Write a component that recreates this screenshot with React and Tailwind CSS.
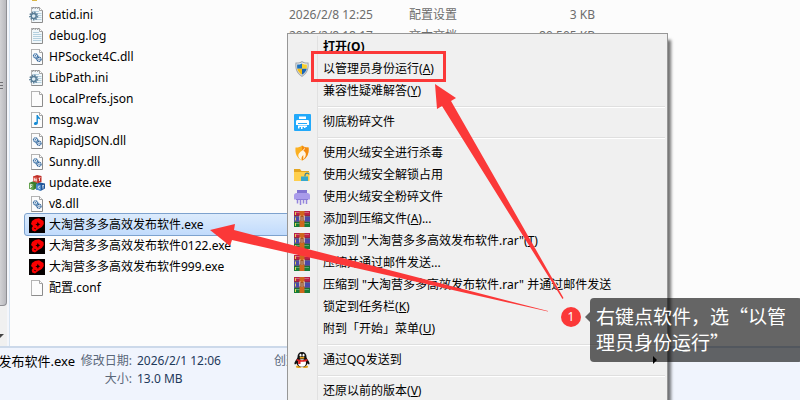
import React from "react";

function Page({ children, lines, spiral }) {
  return (
    <svg viewBox="0 0 16 16" className="size-4 shrink-0" aria-hidden="true">
      <path d="M2.5 .5h8l3 3v12h-11z" fill={lines ? "#f1f7fa" : "#fcfcfc"} stroke="#8c8c8c" />
      <path d="M2.5 15V.5h8" fill="none" stroke="#b4b4b4" />
      <path d="M10.5 .5v3h3" fill="#fff" stroke="#a5a5a5" />
      {lines && <path d="M4 4.5h6M4 6.5h8.5M4 8.5h8.5M4 10.5h8.5M4 12.5h8.5" stroke="#b4d0df" />}
      {spiral && <path d="M3.500 1.800l1-1.500M6 1.800l1-1.500M8.500 1.800l1-1.500" stroke="#777" />}
      {children}
    </svg>
  );
}

function FileIcon({ kind }) {
  if (kind === "ini")
    return (
      <Page lines spiral>
        <circle cx="4.7" cy="9" r="3.7" fill="none" stroke="#5f8199" strokeWidth="1.8" strokeDasharray="1.4 1.1" />
        <circle cx="4.7" cy="9" r="2.5" fill="#dcebf3" stroke="#557b95" strokeWidth="1.4" />
      </Page>
    );
  if (kind === "log") return <Page lines spiral />;
  if (kind === "dll")
    return (
      <Page>
        <path d="M6.500 7l3.600 3.200" stroke="#8fb0ce" strokeWidth="4.500" strokeLinecap="round" />
        <circle cx="6.5" cy="6.8" r="2" fill="#fff" stroke="#3c71a5" strokeWidth="1.3" strokeDasharray="1.3 .5" />
        <circle cx="10" cy="10.3" r="2" fill="#fff" stroke="#2f6299" strokeWidth="1.3" strokeDasharray="1.3 .5" />
        <circle cx="6.5" cy="6.8" r=".7" fill="#3c71a5" />
        <circle cx="10" cy="10.3" r=".7" fill="#3c71a5" />
      </Page>
    );
  if (kind === "wav")
    return (
      <Page>
        <path d="M7.5 3h1.400c.2 2 2.800 2.400 2.400 5.200-.4-1.200-1.300-1.700-2.400-1.800V11c0 2.400-4 2.600-4 .7 0-1.300 1.400-1.800 2.600-1.500z" fill="#168bd4" />
      </Page>
    );
  if (kind === "blank") return <Page />;
  if (kind === "update")
    return (
      <svg viewBox="0 0 16 16" className="size-4 shrink-0" aria-hidden="true">
        <path d="M4 1.500l4-1.500 4.500 1v6l-4 1.500-4.500-1z" fill="#bf3029" />
        <path d="M4 1.500l4.500 1v6l-4.500-1z" fill="#db5a4f" />
        <path d="M5.300 3v3M7.200 3.500v3M5.300 4.700l2 .3M9.500 3.300l2-.7M10.500 3v3" stroke="#fff" strokeWidth=".8" />
        <path d="M0 8l3.500-1.500 4.500 1.200V13l-3.500 2L0 13.500z" fill="#3b7d2e" />
        <path d="M0 8l4.500 1.200V15L0 13.500z" fill="#68a552" />
        <path d="M1.500 13V9.500l2 .5M1.500 11.300l1.500.3" stroke="#fff" strokeWidth=".8" fill="none" />
        <path d="M7 9l4-1.500 5 1v5l-4 2.300-5-1.300z" fill="#1f5699" />
        <path d="M7 9l5 1v5.800l-5-1.300z" fill="#4a88ca" />
        <path d="M11 11.300c-2-1-2.500 2.300-.3 2.300M13 11l2-.8M14 10.700v3" stroke="#fff" strokeWidth=".8" fill="none" />
      </svg>
    );
  return (
    <svg viewBox="0 0 16 16" className="size-4 shrink-0" aria-hidden="true">
      <path d="M0 0h16v16H0z" fill="#050000" />
      <path d="M3 4l3-2 4-.7 4.500 2.700.3 3-2 3-3.500 2-3.300 2.500-2.800-1-.5-2.500L4 9 2 7z" fill="#fa0000" />
      <path d="M8.800 4.800l.8 1.800 1.800.6-1.700.9-.7 1.900-.9-1.700-1.800-.6 1.700-.9z" fill="#120000" />
      <path d="M5.300 11.300l1.500.5" stroke="#120000" />
    </svg>
  );
}

const files = [
  { kind: "ini", name: "catid.ini", date: "2026/2/8 12:25", type: "配置设置", size: "3 KB" },
  { kind: "log", name: "debug.log", date: "2026/2/8 18:17", type: "文本文档", size: "80,505 KB" },
  { kind: "dll", name: "HPSocket4C.dll" },
  { kind: "ini", name: "LibPath.ini" },
  { kind: "blank", name: "LocalPrefs.json" },
  { kind: "wav", name: "msg.wav" },
  { kind: "dll", name: "RapidJSON.dll" },
  { kind: "dll", name: "Sunny.dll" },
  { kind: "update", name: "update.exe" },
  { kind: "dll", name: "v8.dll" },
  { kind: "app", name: "大淘营多多高效发布软件.exe", selected: true },
  { kind: "app", name: "大淘营多多高效发布软件0122.exe" },
  { kind: "app", name: "大淘营多多高效发布软件999.exe" },
  { kind: "blank", name: "配置.conf" },
];

function ScrollBar() {
  return (
    <div className="flex w-[7px] shrink-0 flex-col bg-[#f0f0f0]">
      <div className="flex flex-1 items-center rounded-br-sm border-r border-b border-[#8f8f94] bg-linear-to-r from-[#d2d2d5] to-[#b9b9be]">
        <svg viewBox="0 0 3 166" className="h-[166px] w-[3px]" aria-hidden="true">
          <path d="M0 12.500h3M0 15.500h3M0 18.500h3" stroke="#6f6f74" />
        </svg>
      </div>
      <div className="flex h-10 items-end pb-1">
        <svg viewBox="0 0 4 8" className="h-2 w-1" aria-hidden="true">
          <path d="M0 0h4L0 4z" fill="#444" />
        </svg>
      </div>
    </div>
  );
}

function FileList() {
  return (
    <main className="min-w-0 flex-1 overflow-hidden bg-[#fcfcfc] pl-[15px]">
      <div className="h-1 pl-[7px]">
        <div className="h-px w-[5px] bg-[#d9b545]" />
      </div>
      <table className="w-[574px] table-fixed border-separate border-spacing-0 text-xs leading-5">
        <colgroup>
          <col className="w-[260px]" />
          <col className="w-[120px]" />
          <col className="w-[120px]" />
          <col />
        </colgroup>
        <tbody>
          {files.map((f) => (
            <tr
              key={f.name}
              className={
                f.selected
                  ? "h-[21px] rounded-xs bg-linear-to-b from-[#dcebfc] to-[#c1dbfc] outline outline-[#7da2ce]"
                  : "h-[21px]"
              }
            >
              <td className="p-0 pl-1">
                <div className="flex items-center gap-1 whitespace-nowrap">
                  <FileIcon kind={f.kind} />
                  {f.name}
                </div>
              </td>
              <td className="p-0 pl-1 text-[#6d6d6d]">{f.date}</td>
              <td className="p-0 pl-1 text-[#6d6d6d]">{f.type}</td>
              <td className="p-0 pr-1 text-right text-[#6d6d6d]">{f.size}</td>
            </tr>
          ))}
        </tbody>
      </table>
    </main>
  );
}

function DetailsPane() {
  return (
    <footer className="flex h-[54px] shrink-0 gap-[6px] border-t-2 border-[#ccd9ea] bg-[#f0f4fd] pt-1 text-xs leading-[18px] text-[#1e395b]">
      <div className="flex w-[75px] shrink-0 justify-end overflow-hidden text-[13px] whitespace-nowrap text-black">
        大淘营多多高效发布软件.exe
      </div>
      <dl className="grid w-[187px] shrink-0 grid-cols-[51px_1fr] content-start gap-x-[5px] whitespace-nowrap">
        <dt className="flex justify-end text-[#5a6779]">修改日期:</dt>
        <dd>2026/2/1 12:06</dd>
        <dt className="flex justify-end text-[#5a6779]">大小:</dt>
        <dd>13.0 MB</dd>
      </dl>
      <span className="text-[#5a6779]">创建日期:</span>
    </footer>
  );
}

function MenuIcon({ kind }) {
  const p = { viewBox: "0 0 16 16", className: "size-4", "aria-hidden": true };
  if (kind === "shield")
    return (
      <svg {...p}>
        <path d="M8 0c2 1.400 4 1.700 6.500 1.500.8 6-.8 11-6.500 14.500C2.300 12.500.7 7.500 1.500 1.500 4 1.700 6 1.400 8 0z" fill="#a2a7ab" />
        <path d="M8 1.200c2 1.200 3.500 1.500 5.500 1.400.5 5.400-1 9.400-5.500 12.200C3.500 12 2 8 2.500 2.600 4.500 2.700 6 2.400 8 1.200z" fill="#e8edf0" />
        <path d="M8 2.400v5.400H3.200c-.2-1.500-.1-2.900 0-4.200 1.800 0 3.300-.3 4.800-1.200z" fill="#1e72bd" />
        <path d="M8 2.400v5.400h4.800c.2-1.500.1-2.900 0-4.200-1.800 0-3.300-.3-4.800-1.200z" fill="#f7cf2d" />
        <path d="M3.200 7.800H8v6c-2.700-1.700-4.200-3.500-4.800-6z" fill="#f2bd16" />
        <path d="M12.800 7.800H8v6c2.700-1.700 4.200-3.500 4.800-6z" fill="#1964b4" />
      </svg>
    );
  if (kind === "shred")
    return (
      <svg viewBox="0 0 17 17" className="size-[17px]" aria-hidden="true">
        <rect width="17" height="17" rx="1" fill="#22a9fa" />
        <path d="M5 2.500h7v2.500H5zM3.500 6h10c1 0 1.500.7 1.500 1.500V11H2V7.500C2 6.700 2.500 6 3.500 6zM4 11.500h9v1.500h-1.500v1H10v-1H8.500v2H7v-2H5.500v1.500H4z" fill="#fff" />
        <path d="M4 9.500h9" stroke="#22a9fa" />
      </svg>
    );
  if (kind === "fire")
    return (
      <svg {...p}>
        <path d="M1.500 2.500C4 2.700 6 2 8 .5c2 1.500 4 2.200 6.500 2 .5 6-1 10.300-6.500 13-5.500-2.700-7-7-6.500-13z" fill="#fbb021" />
        <path d="M8 .5c2 1.500 4 2.200 6.500 2 .5 6-1 10.300-6.500 13z" fill="#f38b12" />
        <path d="M10.800 2c.2 3-6.300 4.500-6.500 8.500-.1 1.800 1.200 3.500 3.400 4.500-.8-1.800 0-3.300 1.600-5-.1 2 .3 2.600-.2 4.500 3.200-2.200 4-7.200.2-8.700 1-.8 2-2.300 1.500-3.800z" fill="#fff6e4" />
      </svg>
    );
  if (kind === "unlock")
    return (
      <svg {...p}>
        <path d="M0 2h6l1.500 2H15v10H0z" fill="#e4a51f" />
        <path d="M0 5h15.500v9H0z" fill="#ffcf4c" />
        <path d="M11 9.500V8c0-2.500 4-2.500 4-.5" fill="none" stroke="#357f99" strokeWidth="1.200" />
        <path d="M7 9.500h7V14H7z" fill="#35a8cd" />
      </svg>
    );
  if (kind === "shredFile")
    return (
      <svg {...p}>
        <path d="M3 1h10v4H3z" fill="#8173d2" />
        <path d="M2.500 4h11C15 4 16 5 16 6.500v4H0v-4C0 5 1 4 2.500 4z" fill="#a99bea" />
        <path d="M2 10.500h12" stroke="#8a7bd6" />
        <path d="M3.500 11v3.500M6.500 11v5M9.500 11v3.500M12.500 11v4" stroke="#9485dd" strokeWidth="1.500" />
      </svg>
    );
  if (kind === "rar")
    return (
      <svg {...p}>
        <path d="M0 0h16v5H0z" fill="#b92149" />
        <path d="M0 5.500h16v5H0z" fill="#4a49a8" />
        <path d="M0 11h16v5H0z" fill="#167c37" />
        <path d="M1 1.500h14M1 12.500h14" stroke="#fff" strokeOpacity=".3" />
        <path d="M0 5.200h16M0 10.700h16" stroke="#262338" strokeWidth=".7" />
        <path d="M1.500 1v3M1.500 6.500v3M1.500 12v3" stroke="#e6d24c" />
        <path d="M5.500 0h5v16h-5z" fill="#cf671d" />
        <path d="M6 4.500v5M10 4.500v5M8 6v4" fill="none" stroke="#fff" />
        <path d="M7 5v5M9 5v5" stroke="#7a4328" />
      </svg>
    );
  if (kind === "qq")
    return (
      <svg {...p}>
        <ellipse cx="4.800" cy="14.800" rx="3" ry="1.200" fill="#e5a41b" />
        <ellipse cx="11.200" cy="14.800" rx="3" ry="1.200" fill="#e5a41b" />
        <path d="M8 0c3 0 4.500 2 4.500 5 0 2 3.500 4.500 3 7-.4 1-1.500 0-2-.7C13 13.500 11 15 8 15s-5-1.500-5.500-3.700c-.5.700-1.600 1.700-2 .7-.5-2.500 3-5 3-7C3.500 2 5 0 8 0z" fill="#111" />
        <ellipse cx="8" cy="11" rx="4" ry="3.700" fill="#fff" />
        <ellipse cx="6.500" cy="3.200" rx="1" ry="1.400" fill="#fff" />
        <ellipse cx="9.500" cy="3.200" rx="1" ry="1.400" fill="#fff" />
        <ellipse cx="8" cy="5.700" rx="2.500" ry=".9" fill="#efa81c" />
        <path d="M3 7c3 1.500 7 1.500 10 0l.6 1.500C12 10 8 10 6.500 9.700V12H4.200V9.200L2.400 8.500z" fill="#dd1f22" />
      </svg>
    );
  return null;
}

const menuGroups = [
  [
    { text: "打开", hotkey: "O", bold: true },
    { text: "以管理员身份运行", hotkey: "A", icon: "shield" },
    { text: "兼容性疑难解答", hotkey: "Y" },
  ],
  [{ text: "彻底粉碎文件", icon: "shred" }],
  [
    { text: "使用火绒安全进行杀毒", icon: "fire" },
    { text: "使用火绒安全解锁占用", icon: "unlock" },
    { text: "使用火绒安全粉碎文件", icon: "shredFile" },
    { text: "添加到压缩文件", hotkey: "A", tail: "...", icon: "rar" },
    { text: '添加到 "大淘营多多高效发布软件.rar"', hotkey: "T", icon: "rar" },
    { text: "压缩并通过邮件发送...", icon: "rar" },
    { text: '压缩到 "大淘营多多高效发布软件.rar" 并通过邮件发送', icon: "rar" },
    { text: "锁定到任务栏", hotkey: "K" },
    { text: "附到「开始」菜单", hotkey: "U" },
  ],
  [{ text: "通过QQ发送到", icon: "qq", submenu: true }],
  [{ text: "还原以前的版本", hotkey: "V" }],
];

function MenuItem({ item }) {
  return (
    <button
      type="button"
      className={
        item.bold
          ? "flex h-[22px] w-full items-center text-left font-bold whitespace-nowrap"
          : "flex h-[22px] w-full items-center text-left whitespace-nowrap"
      }
    >
      <span className="flex w-[33px] shrink-0 items-center pl-1">
        <MenuIcon kind={item.icon} />
      </span>
      <span className="flex-1">
        {item.text}
        {item.hotkey && (
          <>
            (<u className="underline-offset-1">{item.hotkey}</u>)
          </>
        )}
        {item.tail}
      </span>
      {item.submenu && (
        <svg viewBox="0 0 4 8" className="mr-2 h-2 w-1" aria-hidden="true">
          <path d="M0 0l4 4-4 4z" fill="#000" />
        </svg>
      )}
    </button>
  );
}

function ContextMenu() {
  return (
    <nav className="absolute top-[33px] -bottom-2 left-[287px] w-[381px] border border-[#979797] bg-[#f0f0f0] p-0.5 text-xs shadow-[4px_6px_3px_-1px_rgba(0,0,0,0.55)]">
      <div className="flex h-full">
        <div className="w-7 shrink-0 border-r border-[#e1e1e1]" />
        <div className="-ml-7 min-w-0 flex-1">
          {menuGroups.map((group, i) => (
            <div key={i}>
              {i > 0 && (
                <div className="flex h-[9px] items-center pl-7">
                  <div className="h-0.5 flex-1 border-t border-[#dfdfdf] bg-white" />
                </div>
              )}
              {group.map((item) => (
                <MenuItem key={item.text} item={item} />
              ))}
            </div>
          ))}
        </div>
      </div>
    </nav>
  );
}

function Annotations() {
  return (
    <>
      <div className="absolute top-[51px] left-[311px] h-[31px] w-[135px] border-3 border-[#fb3838]" />
      <svg viewBox="0 0 800 400" className="pointer-events-none absolute top-0 left-0 h-[400px] w-[800px]" aria-hidden="true">
        <path d="M435 84L456 98L451 101L563.500 298L562.500 299L442 106L437 109Z" fill="#fb3838" />
        <path d="M210 230L235 224L234 230L548 311L548 311.500L232 240L230 246Z" fill="#fb3838" />
      </svg>
      <div className="absolute top-[298px] left-[561px] flex w-[241px] items-start">
        <span className="mt-[9px] flex size-5 shrink-0 items-center justify-center rounded-full bg-[#fb3838] text-xs text-white">
          1
        </span>
        <svg viewBox="0 0 5 10" className="mt-[14px] ml-1 h-[10px] w-[5px] shrink-0" aria-hidden="true">
          <path d="M5 0v10L0 5z" fill="#000" fillOpacity=".6" />
        </svg>
        <p className="flex-1 rounded bg-black/60 px-1.5 pt-[5px] pb-[7px] font-['Noto_Sans_CJK_SC',sans-serif] text-[19px] leading-[26px] whitespace-nowrap text-white">
          右键点软件，选“以管
          <br />
          理员身份运行”
        </p>
      </div>
    </>
  );
}

export default function App() {
  return (
    <div
      lang="zh-CN"
      className="relative flex h-screen w-full flex-col overflow-hidden bg-[#fcfcfc] font-['Noto_Sans','Noto_Sans_CJK_SC',sans-serif] text-black"
    >
      <div className="flex min-h-0 flex-1">
        <ScrollBar />
        <div className="w-[3px] shrink-0 border-r border-[#d6e3f1] bg-[#f4f6fb]" />
        <FileList />
      </div>
      <DetailsPane />
      <ContextMenu />
      <Annotations />
    </div>
  );
}
